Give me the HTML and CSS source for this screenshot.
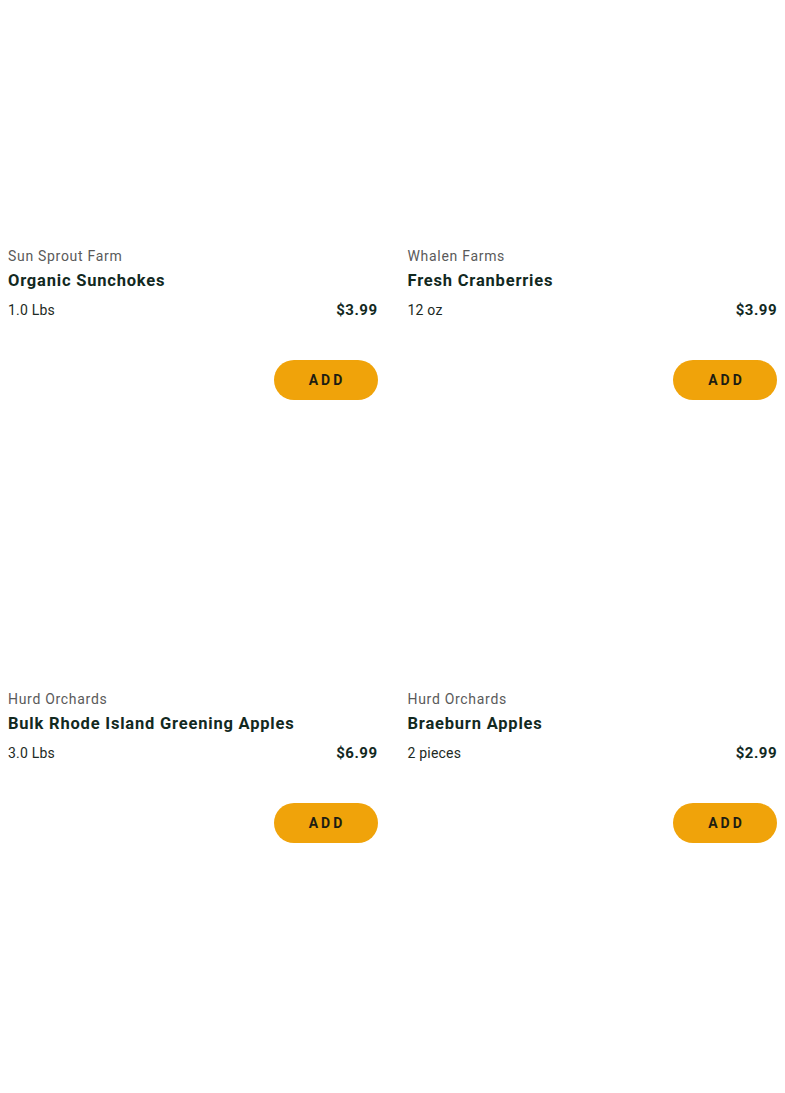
FILE: index.html
```html
<!DOCTYPE html>
<html>
<head>
<meta charset="utf-8">
<link rel="stylesheet" href="styles.css">
</head>
<body>
<div class="grid">
  <div class="card">
    <div class="image"></div>
    <div class="seller">Sun Sprout Farm</div>
    <div class="name">Organic Sunchokes</div>
    <div class="row"><span class="qty">1.0 Lbs</span><span class="price">$3.99</span></div>
    <div class="actions"><button class="add">ADD</button></div>
  </div>
  <div class="card">
    <div class="image"></div>
    <div class="seller">Whalen Farms</div>
    <div class="name">Fresh Cranberries</div>
    <div class="row"><span class="qty">12 oz</span><span class="price">$3.99</span></div>
    <div class="actions"><button class="add">ADD</button></div>
  </div>
  <div class="card">
    <div class="image"></div>
    <div class="seller">Hurd Orchards</div>
    <div class="name">Bulk Rhode Island Greening Apples</div>
    <div class="row"><span class="qty">3.0 Lbs</span><span class="price">$6.99</span></div>
    <div class="actions"><button class="add">ADD</button></div>
  </div>
  <div class="card">
    <div class="image"></div>
    <div class="seller">Hurd Orchards</div>
    <div class="name">Braeburn Apples</div>
    <div class="row"><span class="qty">2 pieces</span><span class="price">$2.99</span></div>
    <div class="actions"><button class="add">ADD</button></div>
  </div>
  <div class="card">
    <div class="image"></div>
  </div>
  <div class="card">
    <div class="image"></div>
  </div>
</div>
</body>
</html>
```

FILE: styles.css
```css
html, body {
  background: #ffffff;
}
body {
  margin: 8px;
  font-family: Roboto, "Liberation Sans", Arial, sans-serif;
  color: #1a2a22;
}
.grid {
  display: grid;
  grid-template-columns: 1fr 1fr;
  column-gap: 30px;
  row-gap: 51px;
}
.card {
  display: flex;
  flex-direction: column;
}
.image {
  height: 236px;
  background: #ffffff;
}
.seller {
  font-size: 14px;
  line-height: 24px;
  color: #5a5a5a;
  letter-spacing: 0.7px;
}
.name {
  font-size: 16.5px;
  line-height: 24px;
  font-weight: 700;
  color: #12291f;
  letter-spacing: 0.8px;
  margin-top: 1px;
}
.row {
  margin-top: 5px;
  display: flex;
  justify-content: space-between;
  line-height: 24px;
  font-size: 14px;
}
.qty {
  color: #1d2a24;
  letter-spacing: 0.2px;
}
.price {
  font-weight: 700;
  font-size: 15px;
  color: #12291f;
  letter-spacing: 0.5px;
}
.actions {
  margin-top: 38px;
  display: flex;
  justify-content: flex-end;
}
.add {
  width: 104px;
  height: 40px;
  border: none;
  border-radius: 20px;
  background: #f0a30a;
  color: #1d1d12;
  font-family: Roboto, "Liberation Sans", Arial, sans-serif;
  font-size: 14px;
  font-weight: 700;
  letter-spacing: 3px;
  padding: 0 0 0 3px;
}
```
